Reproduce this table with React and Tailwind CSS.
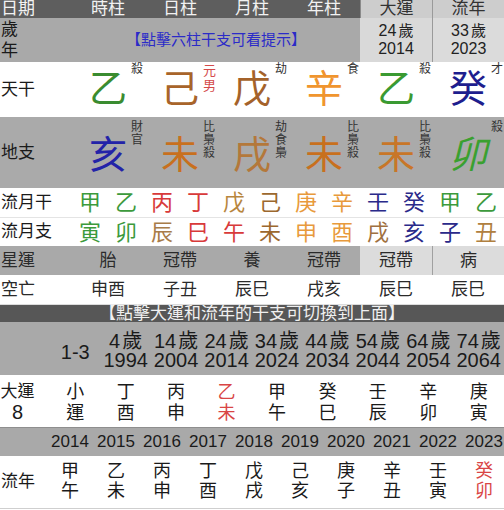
import React from "react";

const G = "#3c9a3c";
const R = "#d83a3a";
const M = "#e89a3c";
const W = "#2a2a8a";

const tg = [
  { c: "乙", color: "#3a8c30", s: ["殺"] },
  { c: "己", color: "#a8642a", s: ["元", "男"], red: true },
  { c: "戊", color: "#a4622a", s: ["劫"] },
  { c: "辛", color: "#f0952e", s: ["食"] },
  { c: "乙", color: "#3a9a32", s: ["殺"] },
  { c: "癸", color: "#1e1e8e", s: ["才"] },
];

const dz = [
  { c: "亥", color: "#2323a8", s: ["財", "官"] },
  { c: "未", color: "#c8701e", s: ["比", "梟", "殺"] },
  { c: "戌", color: "#b4783a", s: ["劫", "食", "梟"] },
  { c: "未", color: "#c8701e", s: ["比", "梟", "殺"] },
  { c: "未", color: "#c87628", s: ["比", "梟", "殺"] },
  { c: "卯", color: "#3aa030", s: ["殺"], italic: true },
];

const lyg = [
  ["甲", G], ["乙", G], ["丙", R], ["丁", R], ["戊", "#b8863e"], ["己", "#9c682e"],
  ["庚", M], ["辛", M], ["壬", W], ["癸", W], ["甲", G], ["乙", G],
];
const lyz = [
  ["寅", G], ["卯", G], ["辰", "#a87c48"], ["巳", R], ["午", R], ["未", "#9c682e"],
  ["申", M], ["酉", M], ["戌", "#a07040"], ["亥", W], ["子", W], ["丑", "#b08040"],
];

const dyAges = [
  ["4", "1994"], ["14", "2004"], ["24", "2014"], ["34", "2024"], ["44", "2034"],
  ["54", "2044"], ["64", "2054"], ["74", "2064"],
];
const dyGz = [
  ["小", "運"], ["丁", "酉"], ["丙", "申"], ["乙", "未"], ["甲", "午"],
  ["癸", "巳"], ["壬", "辰"], ["辛", "卯"], ["庚", "寅"],
];
const lnYears = ["2014", "2015", "2016", "2017", "2018", "2019", "2020", "2021", "2022", "2023"];
const lnGz = [
  ["甲", "午"], ["乙", "未"], ["丙", "申"], ["丁", "酉"], ["戊", "戌"],
  ["己", "亥"], ["庚", "子"], ["辛", "丑"], ["壬", "寅"], ["癸", "卯"],
];

function BigCell({ d, top, extra }) {
  return (
    <div className={`relative flex items-center justify-center ${extra || ""}`}>
      <span
        className={`text-[38px] leading-[40px] ${d.italic ? "italic" : ""}`}
        style={{ color: d.color }}
      >
        {d.c}
      </span>
      <div
        className={`absolute left-[calc(50%+23px)] ${top} flex flex-col text-[12px] ${
          d.red ? "text-[#d44a4a] leading-[15px] text-[13px]" : "text-[#333] leading-[13px]"
        }`}
      >
        {d.s.map((x, i) => (
          <span key={i}>{x}</span>
        ))}
      </div>
    </div>
  );
}

export default function App() {
  return (
    <div className="w-[504px] h-[510px] overflow-hidden bg-white text-[#1a1a1a] font-['Liberation_Sans','Noto_Sans_CJK_TC',sans-serif]">
      {/* header */}
      <div className="grid grid-cols-7 h-[18px] text-[17px] leading-[18px]">
        <div className="bg-[#5e5e5e] text-[#f2f2f2] pl-[1px]">日期</div>
        {["時柱", "日柱", "月柱", "年柱"].map((t) => (
          <div key={t} className="bg-[#5e5e5e] text-[#f2f2f2] text-center">{t}</div>
        ))}
        <div className="bg-[#cdcdcd] text-[#333] text-center border-l border-[#8a8a8a]">大運</div>
        <div className="bg-[#cdcdcd] text-[#333] text-center border-l border-[#9a9a9a]">流年</div>
      </div>

      {/* 歲年 row */}
      <div className="grid grid-cols-7 h-[44px]">
        <div className="bg-[#a9a9a9] text-[17px] leading-[21px] pt-[1px] pl-[1px]">
          歲<br />年
        </div>
        <div className="col-span-4 bg-[#a9a9a9] flex items-center justify-center text-[15px] text-[#2b2bc8]">
          【點擊六柱干支可看提示】
        </div>
        <div className="bg-[#d9d9d9] flex flex-col items-center justify-center text-[16px] leading-[18px] text-[#222]">
          <span>24<span className="ml-[2px] text-[15px]">歲</span></span>
          <span>2014</span>
        </div>
        <div className="bg-[#dbdbdb] border-l border-[#9a9a9a] flex flex-col items-center justify-center text-[16px] leading-[18px] text-[#222]">
          <span>33<span className="ml-[2px] text-[15px]">歲</span></span>
          <span>2023</span>
        </div>
      </div>

      {/* 天干 */}
      <div className="grid grid-cols-7 h-[55px] bg-white">
        <div className="flex items-center text-[17px] pl-[1px]">天干</div>
        {tg.map((d, i) => (
          <BigCell key={i} d={d} top="top-[3px]" extra="-mt-[2px]" />
        ))}
      </div>

      {/* 地支 */}
      <div className="grid grid-cols-7 h-[71px] bg-[#aaaaaa]">
        <div className="flex items-center text-[17px] pl-[1px]">地支</div>
        {dz.map((d, i) => (
          <BigCell key={i} d={d} top="top-[4px]" extra="pt-[5px]" />
        ))}
      </div>

      {/* 流月干 */}
      <div className="flex h-[30px] bg-white border-b border-[#e4e4e4]">
        <div className="w-[72px] flex items-center text-[17px] pl-[1px]">流月干</div>
        {lyg.map(([c, col], i) => (
          <div key={i} className="w-[36px] flex items-center justify-center text-[22px]" style={{ color: col }}>
            {c}
          </div>
        ))}
      </div>
      {/* 流月支 */}
      <div className="flex h-[28px] bg-white">
        <div className="w-[72px] flex items-center text-[17px] pl-[1px]">流月支</div>
        {lyz.map(([c, col], i) => (
          <div key={i} className="w-[36px] flex items-center justify-center text-[22px]" style={{ color: col }}>
            {c}
          </div>
        ))}
      </div>

      {/* 星運 */}
      <div className="grid grid-cols-7 h-[29px] text-[17px] text-[#2a2a2a]">
        <div className="bg-[#a9a9a9] flex items-center pl-[1px]">星運</div>
        {["胎", "冠帶", "養", "冠帶"].map((t, i) => (
          <div key={i} className="bg-[#a9a9a9] flex items-center justify-center">{t}</div>
        ))}
        <div className="bg-[#dcdcdc] flex items-center justify-center">冠帶</div>
        <div className="bg-[#dcdcdc] border-l border-[#a0a0a0] flex items-center justify-center">病</div>
      </div>

      {/* 空亡 */}
      <div className="grid grid-cols-7 h-[30px] text-[17px] text-[#2a2a2a] bg-white border-b border-[#dcdcdc]">
        <div className="flex items-center pl-[1px]">空亡</div>
        {["申酉", "子丑", "辰巳", "戌亥", "辰巳", "辰巳"].map((t, i) => (
          <div key={i} className="flex items-center justify-center">{t}</div>
        ))}
      </div>

      {/* banner */}
      <div className="h-[17px] bg-[#575757] text-[#f0f0f0] text-[17px] leading-[17px] text-center">
        【點擊大運和流年的干支可切換到上面】
      </div>

      {/* 大運 ages */}
      <div className="flex h-[53px] bg-[#a9a9a9] text-[20px] text-[#1a1a1a]">
        <div className="w-[50px]" />
        <div className="flex-1 flex items-center justify-center pt-[7px]">1-3</div>
        {dyAges.map(([a, y], i) => (
          <div key={i} className="flex-1 flex flex-col items-center pt-[10px] leading-[19px] whitespace-nowrap">
            <span>{a}<span className="ml-[2px]">歲</span></span>
            <span>{y}</span>
          </div>
        ))}
      </div>

      {/* 大運 gz */}
      <div className="flex h-[53px] bg-white border-b border-[#8e8e8e]">
        <div className="w-[50px] pt-[6px]">
          <div className="w-[35px] flex flex-col items-center leading-[21px]">
            <span className="text-[17px]">大運</span>
            <span className="text-[20px]">8</span>
          </div>
        </div>
        {dyGz.map(([a, b], i) => (
          <div
            key={i}
            className={`flex-1 flex flex-col items-center pt-[7px] text-[18px] leading-[21px] ${
              i === 3 ? "text-[#d94545]" : "text-[#1a1a1a]"
            }`}
          >
            <span>{a}</span>
            <span>{b}</span>
          </div>
        ))}
      </div>

      {/* 流年 years */}
      <div className="flex h-[28px] bg-[#a9a9a9] text-[17px] text-[#1a1a1a]">
        <div className="w-[47px] shrink-0" />
        {lnYears.map((y) => (
          <div key={y} className="w-[46px] shrink-0 flex items-center justify-center">{y}</div>
        ))}
      </div>

      {/* 流年 gz */}
      <div className="flex h-[53px] bg-white border-b border-[#cfcfcf]">
        <div className="w-[47px] shrink-0 flex items-center text-[17px] pl-[1px]">流年</div>
        {lnGz.map(([a, b], i) => (
          <div
            key={i}
            className={`w-[46px] shrink-0 flex flex-col items-center pt-[5px] text-[18px] leading-[20px] ${
              i === 9 ? "text-[#d94545]" : "text-[#1a1a1a]"
            }`}
          >
            <span>{a}</span>
            <span>{b}</span>
          </div>
        ))}
      </div>
    </div>
  );
}
